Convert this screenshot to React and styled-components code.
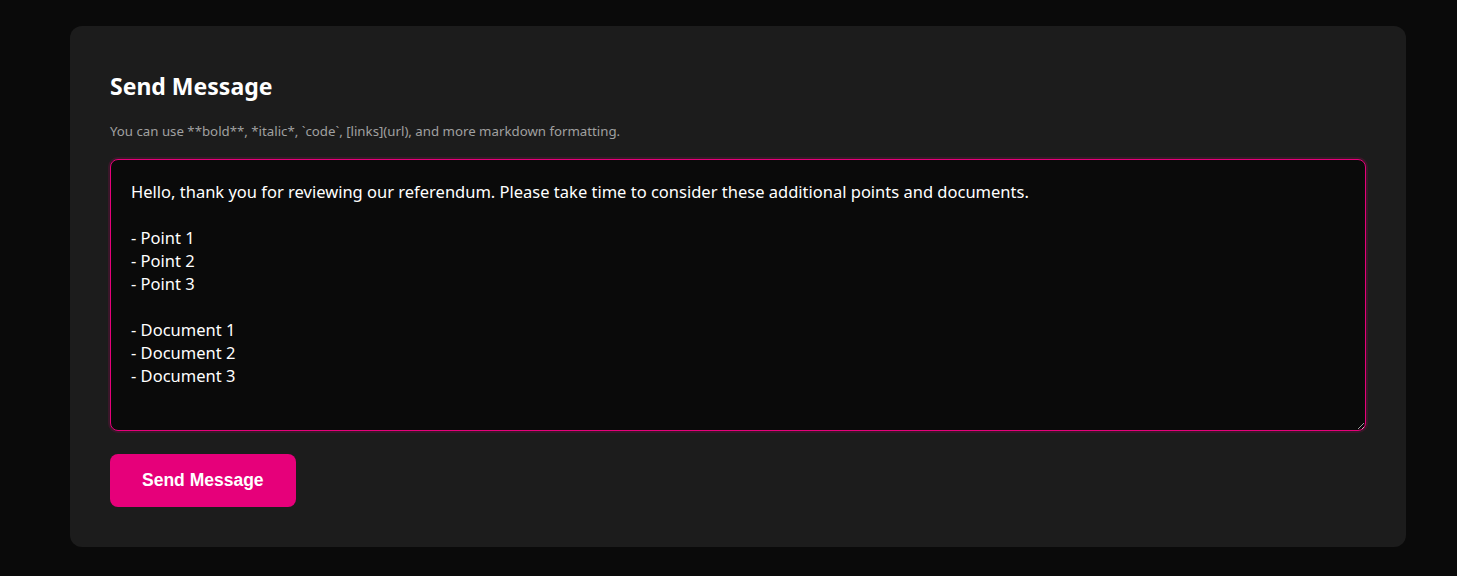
import { useState } from "react";
import styled, { createGlobalStyle } from "styled-components";

const GlobalStyle = createGlobalStyle`
  html, body {
    margin: 0;
    padding: 0;
    background-color: #0a0a0a;
  }
  body {
    font-family: "Noto Sans", "Open Sans", sans-serif;
    color: #fff;
  }
`;

const Page = styled.div`
  min-height: 100vh;
  padding: 26px 51px 29px 70px;
  box-sizing: border-box;
`;

const Card = styled.section`
  background-color: #1c1c1c;
  border-radius: 12px;
  padding: 40px;
  display: flex;
  flex-direction: column;
`;

const Title = styled.h2`
  margin: 0 0 15px;
  font-size: 23px;
  line-height: 40px;
  font-weight: 700;
  color: #fff;
`;

const Hint = styled.p`
  margin: 0 0 18px;
  font-size: 13.25px;
  line-height: 20px;
  color: #a0a0a0;
`;

const MessageInput = styled.textarea`
  box-sizing: border-box;
  width: 100%;
  height: 272px;
  padding: 20px;
  background-color: #0a0a0a;
  color: #fff;
  font-family: inherit;
  font-size: 16.5px;
  line-height: 23px;
  border: 1px solid #e6007a;
  border-radius: 8px;
  box-shadow: 0 0 0 2px rgba(230, 0, 122, 0.15);
  outline: none;
  resize: vertical;
  margin-bottom: 23px;
`;

const SendButton = styled.button`
  align-self: flex-start;
  background-color: #e6007a;
  color: #fff;
  border: none;
  border-radius: 8px;
  padding: 16px 32px;
  font-family: "Liberation Sans", Arial, sans-serif;
  font-size: 17.5px;
  line-height: 21px;
  font-weight: 700;
  cursor: pointer;

  &:hover {
    background-color: #cc006c;
  }
`;

const initialMessage = `Hello, thank you for reviewing our referendum. Please take time to consider these additional points and documents.

- Point 1
- Point 2
- Point 3

- Document 1
- Document 2
- Document 3`;

function App() {
  const [message, setMessage] = useState(initialMessage);

  return (
    <>
      <GlobalStyle />
      <Page>
        <Card>
          <Title>Send Message</Title>
          <Hint>
            You can use **bold**, *italic*, `code`, [links](url), and more
            markdown formatting.
          </Hint>
          <MessageInput
            value={message}
            onChange={(e) => setMessage(e.target.value)}
          />
          <SendButton>Send Message</SendButton>
        </Card>
      </Page>
    </>
  );
}

export default App;
